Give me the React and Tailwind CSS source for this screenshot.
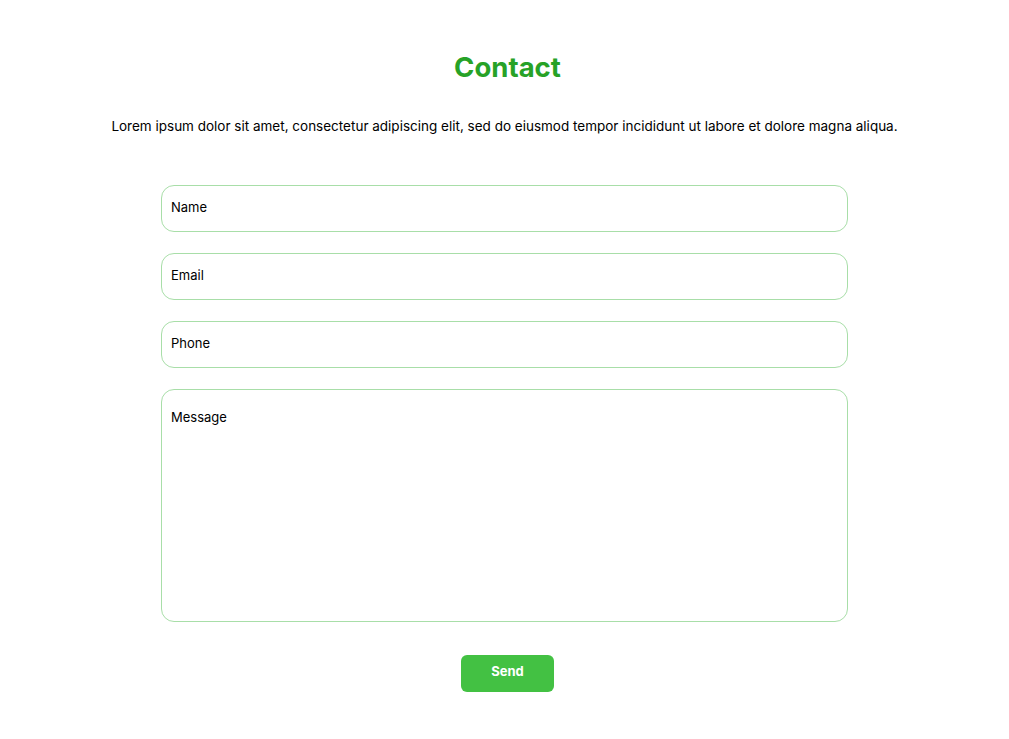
import React from "react";

function Field({ label }) {
  return (
    <input
      type="text"
      placeholder={label}
      className="w-full h-[47px] rounded-[13px] border border-[#a8dea8] pl-[9px] pr-[10px] pb-[3px] text-[13px] text-black placeholder:text-black outline-none"
    />
  );
}

export default function App() {
  return (
    <div className="min-h-screen bg-white font-[Inter] flex flex-col items-center pt-[50px]">
      {/* Title */}
      <h1 className="ml-[6px] text-[27.5px] leading-[34px] font-bold text-[#27a227]">Contact</h1>

      <p className="mt-[33px] text-[13.5px] leading-[18px] text-black">
        Lorem ipsum dolor sit amet, consectetur adipiscing elit, sed do eiusmod tempor incididunt ut labore et dolore magna aliqua.
      </p>

      {/* Form */}
      <form className="mt-[50px] w-[687px] flex flex-col gap-[21px]">
        <Field label="Name" />
        <Field label="Email" />
        <Field label="Phone" />
        <textarea
          placeholder="Message"
          className="w-full h-[233px] rounded-[13px] border border-[#a8dea8] pl-[9px] pr-[10px] pt-[18px] text-[13px] text-black placeholder:text-black outline-none resize-none"
        />
      </form>

      <button className="ml-[6px] mt-[33px] w-[93px] h-[37px] pb-[3px] rounded-[6px] bg-[#43c143] text-white text-[13px] font-bold">
        Send
      </button>
    </div>
  );
}
